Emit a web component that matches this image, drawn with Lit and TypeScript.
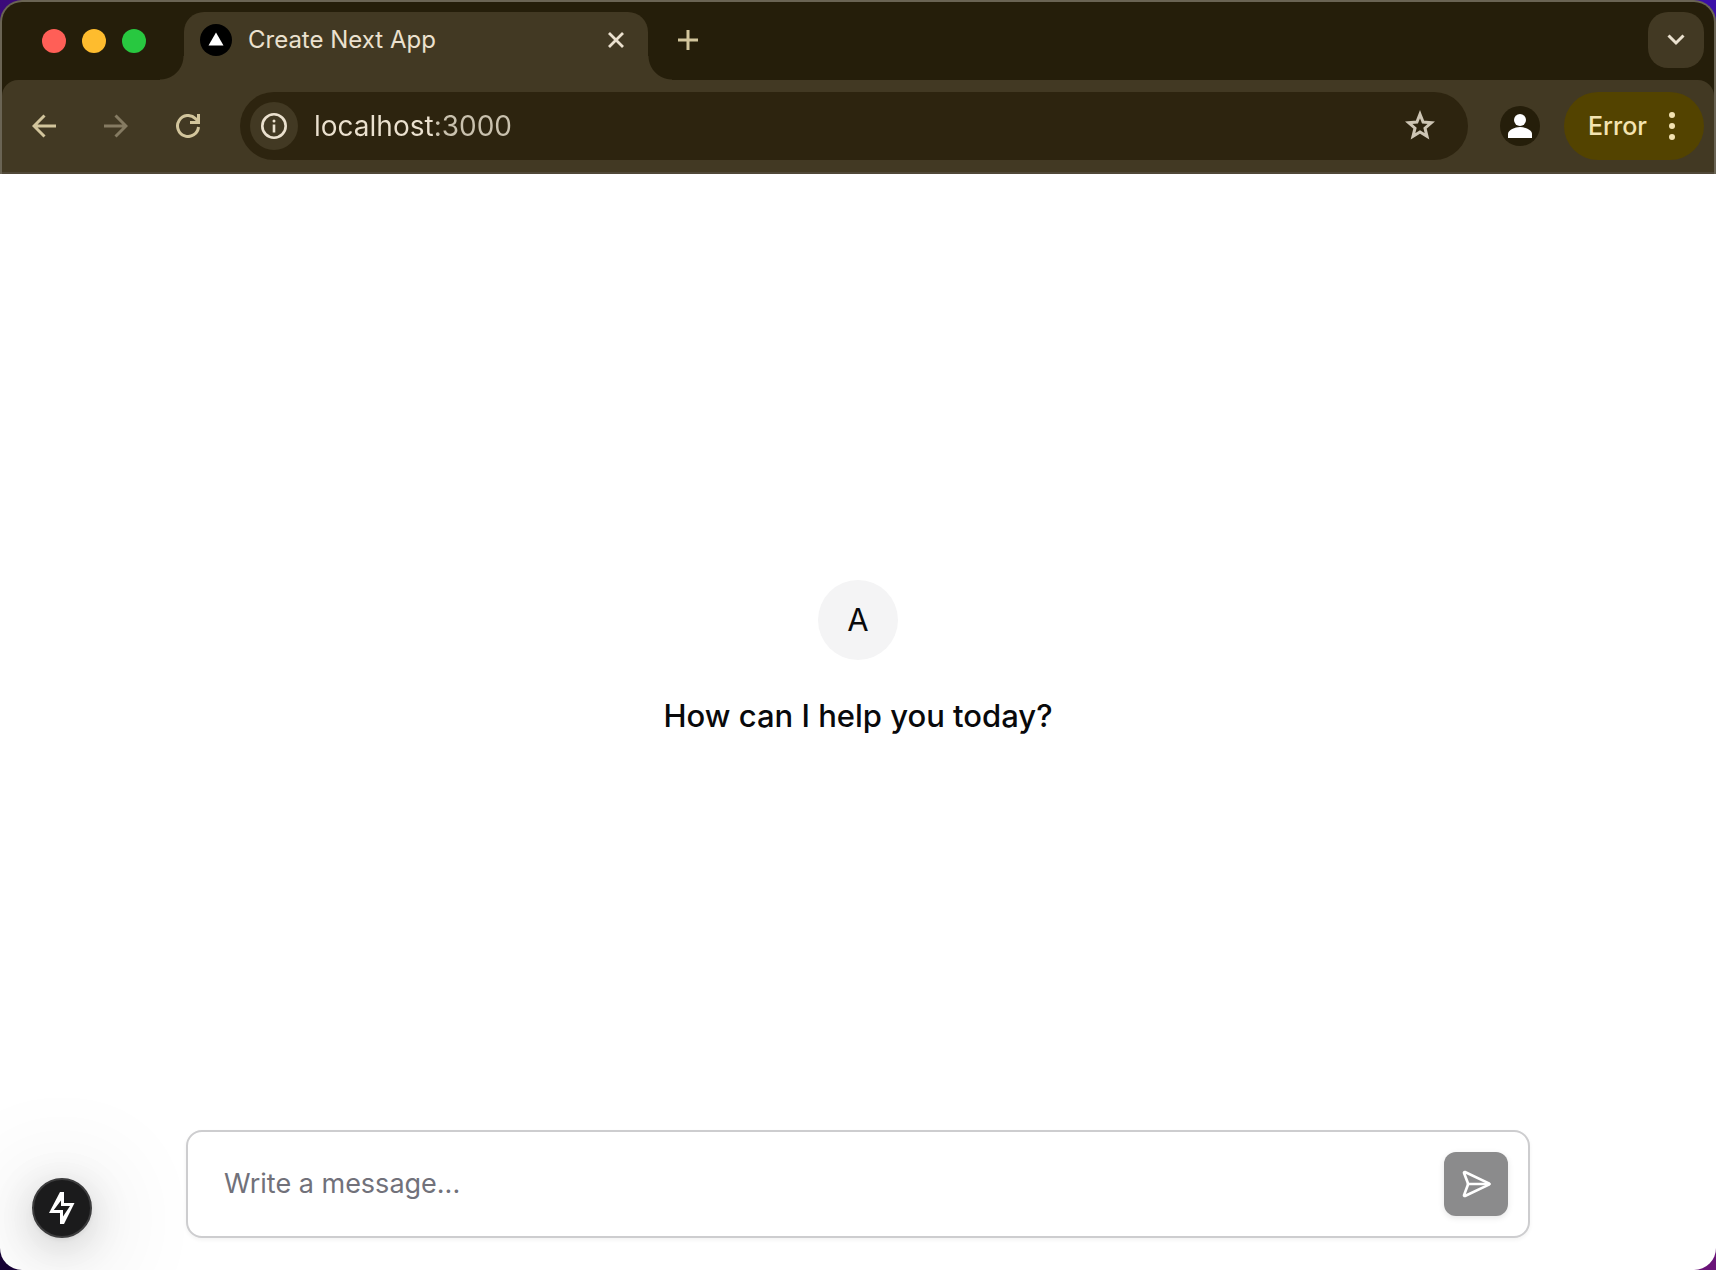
import { LitElement, html, svg, css } from "lit";
import { customElement, state } from "lit/decorators.js";

const arrow = svg`<path d="M24 12H2M12.500 1.500 2 12l10.500 10.500" fill="none" stroke="currentColor" stroke-width="3"/>`;

@customElement("browser-tabs")
class BrowserTabs extends LitElement {
  static styles = css`
    :host { display: block; }
    .strip { display: flex; align-items: flex-end; height: 78px; padding: 0 10px 0 40px; }
    .lights { display: flex; gap: 16px; padding-right: 14px; height: 78px; align-items: center; }
    .light { width: 24px; height: 24px; border-radius: 50%; border: 0; padding: 0; }
    .close-window { background: #ff5f57; }
    .minimize { background: #febc2e; }
    .zoom { background: #28c840; }
    .foot { width: 24px; height: 24px; flex: none; }
    .foot-left { background: radial-gradient(circle at 0 0, transparent 23px, #423923 24px); }
    .foot-right { background: radial-gradient(circle at 100% 0, transparent 23px, #423923 24px); }
    .tab {
      display: flex; align-items: center; flex: 0 1 464px; box-sizing: border-box; min-width: 0;
      height: 68px; padding: 0 18px 12px 16px; background: #423923; border-radius: 20px 20px 0 0;
    }
    .favicon { width: 32px; height: 32px; flex: none; }
    .title { flex: 1; min-width: 0; margin-left: 16px; font-size: 24px; line-height: 32px; color: #ebe1cf; white-space: nowrap; overflow: hidden; }
    .icon-button { display: grid; place-items: center; padding: 0; border: 0; background: none; color: #ebe1cf; }
    .close { width: 28px; height: 28px; }
    .add { width: 32px; height: 32px; margin-bottom: 24px; color: #d2c59c; }
    .spacer { flex: 1; }
    .search { width: 56px; height: 56px; margin-bottom: 12px; border-radius: 20px; background: #423923; }
  `;
  render() {
    return html`
      <div class="strip">
        <div class="lights">
          <button class="light close-window" aria-label="Close window"></button>
          <button class="light minimize" aria-label="Minimize"></button>
          <button class="light zoom" aria-label="Zoom"></button>
        </div>
        <span class="foot foot-left"></span>
        <div class="tab">
          <svg class="favicon" viewBox="0 0 32 32" aria-hidden="true">
            <circle cx="16" cy="16" r="16" fill="#000"/><path d="M16 8.500 23.500 21.500H8.500Z" fill="#fff"/>
          </svg>
          <span class="title">Create Next App</span>
          <button class="icon-button close" aria-label="Close tab">
            <svg width="18" height="18" viewBox="0 0 18 18"><path d="M2 2l14 14M16 2 2 16" stroke="currentColor" stroke-width="2.800" fill="none"/></svg>
          </button>
        </div>
        <span class="foot foot-right"></span>
        <button class="icon-button add" aria-label="New tab">
          <svg width="20" height="20" viewBox="0 0 20 20"><path d="M10 0v20M0 10h20" stroke="currentColor" stroke-width="3"/></svg>
        </button>
        <span class="spacer"></span>
        <button class="icon-button search" aria-label="Search tabs">
          <svg width="18" height="12" viewBox="0 0 18 12"><path d="M1.500 1.500 9 9l7.500-7.500" fill="none" stroke="currentColor" stroke-width="3"/></svg>
        </button>
      </div>
    `;
  }
}

@customElement("browser-toolbar")
class BrowserToolbar extends LitElement {
  static styles = css`
    :host { display: block; }
    .bar {
      display: flex; align-items: center; height: 92px; padding: 0 10px 0 20px;
      background: #423923; border-bottom: 2px solid #504838; border-radius: 16px 16px 0 0;
    }
    .nav { display: flex; gap: 28px; }
    .nav-button { display: grid; place-items: center; width: 44px; height: 44px; padding: 0; border: 0; background: none; color: #d2c59c; }
    .nav-button:disabled { color: #857b62; }
    .flip { transform: scaleX(-1); }
    .omnibox {
      flex: 1; min-width: 0; display: flex; align-items: center; height: 68px; box-sizing: border-box;
      margin: 0 32px 0 30px; padding: 0 32px 0 10px; border-radius: 34px; background: #2d240f;
    }
    .info { display: grid; place-items: center; flex: none; width: 48px; height: 48px; padding: 0; border: 0; border-radius: 50%; background: #423923; color: #ebe1cf; }
    .url {
      flex: 1; min-width: 0; margin: 0 16px; padding: 0; border: 0; outline: 0; height: 36px;
      font: 400 28px/36px Inter, "Liberation Sans", sans-serif; color: #ebe1cf;
      background: linear-gradient(90deg, #ebe1cf 120px, #c9c1ae 120px);
      -webkit-background-clip: text; background-clip: text; -webkit-text-fill-color: transparent;
    }
    .star { width: 32px; height: 32px; display: grid; place-items: center; padding: 0; border: 0; background: none; color: #cdc5b4; }
    .profile { flex: none; width: 40px; height: 40px; padding: 0; border: 0; background: none; }
    .error {
      display: flex; align-items: center; justify-content: space-between; width: 140px; height: 68px; margin-left: 24px; padding: 0 29px 0 24px;
      border: 0; border-radius: 34px; background: #534300; color: #f3e3b1; font: 500 25px/32px Inter, "Liberation Sans", sans-serif;
    }
  `;
  render() {
    return html`
      <div class="bar">
        <div class="nav">
          <button class="nav-button" aria-label="Back"><svg width="24" height="24" viewBox="0 0 24 24">${arrow}</svg></button>
          <button class="nav-button" aria-label="Forward" disabled><svg class="flip" width="24" height="24" viewBox="0 0 24 24">${arrow}</svg></button>
          <button class="nav-button" aria-label="Reload">
            <svg width="24" height="24" viewBox="0 0 24 24" fill="none" stroke="currentColor" stroke-width="3">
              <path d="M22.500 13A10.500 10.500 0 1 1 19.500 4.600L22 7"/><path d="M22.500 0V8.500H14"/>
            </svg>
          </button>
        </div>
        <div class="omnibox">
          <button class="info" aria-label="View site information">
            <svg width="26" height="26" viewBox="0 0 26 26"><circle cx="13" cy="13" r="11.700" fill="none" stroke="currentColor" stroke-width="2.600"/><path d="M13 11.500v8" stroke="currentColor" stroke-width="2.600"/><circle cx="13" cy="8" r="1.500" fill="currentColor"/></svg>
          </button>
          <input class="url" type="text" aria-label="Address" value="localhost:3000" spellcheck="false" />
          <button class="star" aria-label="Bookmark this tab">
            <svg width="32" height="32" viewBox="0 0 32 32"><path fill="none" stroke="currentColor" stroke-width="3" d="M16 4.200 19.100 12.100 27.300 12.700 21 18.200 23 26.300 16 22 9 26.300 11 18.200 4.700 12.700 12.900 12.100Z"/></svg>
          </button>
        </div>
        <button class="profile" aria-label="Profile">
          <svg width="40" height="40" viewBox="0 0 40 40"><circle cx="20" cy="20" r="20" fill="#251e0a"/><circle cx="20" cy="14" r="6" fill="#fff"/><path d="M8 32v-4c0-4 7-7 12-7s12 3 12 7v4Z" fill="#fff"/></svg>
        </button>
        <button class="error">Error
          <svg width="6" height="28" viewBox="0 0 6 28" fill="currentColor" aria-hidden="true"><circle cx="3" cy="3" r="3"/><circle cx="3" cy="14" r="3"/><circle cx="3" cy="25" r="3"/></svg>
        </button>
      </div>
    `;
  }
}

@customElement("chat-page")
class ChatPage extends LitElement {
  static styles = css`
    :host { display: flex; flex-direction: column; flex: 1; }
    .page { flex: 1; display: flex; flex-direction: column; color: #09090b; background: #fff; border-radius: 0 0 22px 22px; position: relative; overflow: hidden; }
    .welcome { flex: 1; display: flex; flex-direction: column; align-items: center; justify-content: center; gap: 32px; padding-top: 16px; }
    .avatar { display: grid; place-items: center; width: 80px; height: 80px; border-radius: 50%; background: #f4f4f5; font-size: 31px; line-height: 48px; }
    .greeting { margin: 0; font-size: 31px; font-weight: 500; line-height: 48px; }
    .composer {
      display: flex; align-items: center; box-sizing: border-box; width: calc(100% - 64px); max-width: 1344px; min-height: 108px;
      margin: 0 auto 32px; padding: 20px; border: 2px solid #cdcdcf; border-radius: 16px; background: #fff; box-shadow: 0 2px 4px rgba(0, 0, 0, 0.05);
    }
    .message { flex: 1; min-width: 0; padding: 0 16px; border: 0; outline: 0; background: none; font: 400 27px/40px Inter, "Liberation Sans", sans-serif; color: #09090b; }
    .message::placeholder { color: #71717a; opacity: 1; }
    .send { display: grid; place-items: center; flex: none; width: 64px; height: 64px; padding: 0; border: 0; border-radius: 12px; background: #8b8b8c; color: #fff; box-shadow: 0 2px 6px rgba(0, 0, 0, 0.1); }
    .dev {
      position: absolute; left: 32px; bottom: 32px; display: grid; place-items: center; width: 60px; height: 60px; padding: 0;
      border: 2px solid #3c3c3d; border-radius: 50%; background: #1b1b1c; color: #fff;
      box-shadow: 0 8px 40px rgba(0, 0, 0, 0.16), 0 2px 4px rgba(0, 0, 0, 0.06), 0 12px 110px 12px rgba(0, 0, 0, 0.14);
    }
  `;
  @state() private draft = "";
  render() {
    return html`
      <main class="page">
        <section class="welcome">
          <div class="avatar">A</div>
          <p class="greeting">How can I help you today?</p>
        </section>
        <form class="composer" @submit=${(e: Event) => e.preventDefault()}>
          <input class="message" type="text" aria-label="Message" placeholder="Write a message..." .value=${this.draft}
            @input=${(e: InputEvent) => { this.draft = (e.target as HTMLInputElement).value; }} />
          <button class="send" aria-label="Send" ?disabled=${!this.draft}>
            <svg width="32" height="32" viewBox="0 0 24 24" fill="none" stroke="currentColor" stroke-width="2" stroke-linecap="round" stroke-linejoin="round">
              <path d="M3.714 3.048a.498.498 0 0 0-.683.627l2.843 7.627a2 2 0 0 1 0 1.396l-2.842 7.627a.498.498 0 0 0 .682.627l18-8.500a.5.500 0 0 0 0-.904z"/><path d="M6 12h16"/>
            </svg>
          </button>
        </form>
        <button class="dev" aria-label="Open developer tools">
          <svg width="26" height="32" viewBox="0 0 26 32" fill="currentColor" fill-rule="evenodd">
            <path d="M11 0H15V11H25.500L15 32H11V21H0ZM12 8.500 4.800 18H14V24.500L21 14H12Z"/>
          </svg>
        </button>
      </main>
    `;
  }
}

@customElement("app-root")
class AppRoot extends LitElement {
  static styles = css`
    :host {
      display: block; font-family: Inter, "Liberation Sans", sans-serif;
      background: linear-gradient(#3b0a7a, #150033) left / 50% 100% no-repeat, linear-gradient(#3a0fa8, #6a1478) right / 50% 100% no-repeat;
    }
    .window { display: flex; flex-direction: column; min-height: 100vh; }
    .chrome { background: #251e0a; border: 2px solid #6a6454; border-bottom: 0; border-radius: 22px 22px 0 0; }
  `;
  render() {
    return html`
      <div class="window">
        <header class="chrome">
          <browser-tabs></browser-tabs>
          <browser-toolbar></browser-toolbar>
        </header>
        <chat-page></chat-page>
      </div>
    `;
  }
}
